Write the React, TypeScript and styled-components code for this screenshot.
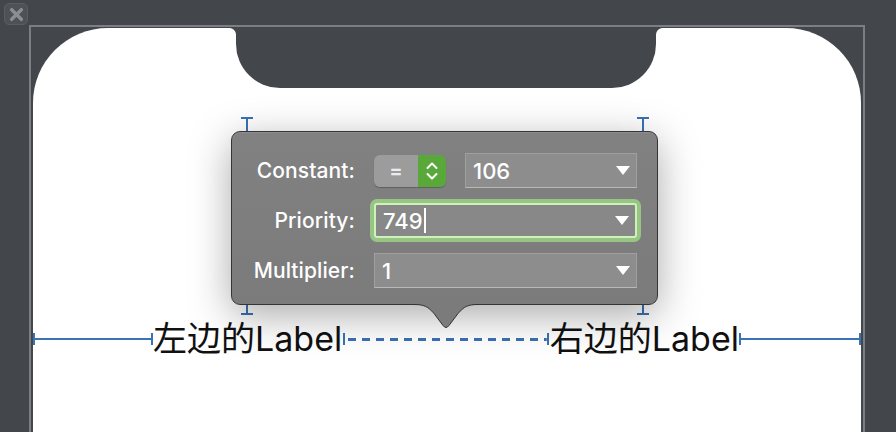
import React from "react";
import styled, { createGlobalStyle, css } from "styled-components";

const BLUE = "#3b72b4";
const DARK = "#43464b";

const GlobalStyle = createGlobalStyle`
    html, body {
        margin: 0;
        padding: 0;
        background: ${DARK};
    }
`;

const Chevrons: React.FC = () => (
    <svg width="14" height="26" viewBox="0 0 14 26" fill="none" stroke="#fff" strokeWidth="2" strokeLinecap="round" strokeLinejoin="round">
        <path d="M2.5 10 L7 5.5 L11.5 10" />
        <path d="M2.5 16 L7 20.5 L11.5 16" />
    </svg>
);

const CloseIcon: React.FC = () => (
    <svg width="15" height="15" viewBox="0 0 14 14" stroke="#8c8e92" strokeWidth="3.2" strokeLinecap="round">
        <path d="M2.5 2.5 L11.5 11.5 M11.5 2.5 L2.5 11.5" />
    </svg>
);

const PopoverArrow: React.FC = () => (
    <ArrowSvg width="64" height="27" viewBox="0 0 64 27">
        <path d="M0 0 H64 V1.5 C54 1.5 50 3.5 44 10.5 L35 22.5 Q32 26.5 29 22.5 L20 10.5 C14 3.5 10 1.5 0 1.5 Z" fill="#7b7b7b" />
        <path d="M0 1.5 C10 1.5 14 3.5 20 10.5 L29 22.5 Q32 26.5 35 22.5 L44 10.5 C50 3.5 54 1.5 64 1.5" fill="none" stroke="#333" strokeWidth="1" />
    </ArrowSvg>
);

const App: React.FC = () => {
    return (
        <Page>
            <GlobalStyle />
            <CloseButton><CloseIcon /></CloseButton>
            <Frame>
                <Screen>
                    <Notch />
                    <ConstraintRow>
                        <Guide $width={120} />
                        <ViewLabel>左边的Label</ViewLabel>
                        <Guide $dashed />
                        <ViewLabel>右边的Label</ViewLabel>
                        <Guide $width={122} />
                    </ConstraintRow>
                </Screen>
            </Frame>

            <Popover>
                <RowLabel>Constant:</RowLabel>
                <Controls>
                    <Stepper>
                        <StepperValue>=</StepperValue>
                        <StepperArrows><Chevrons /></StepperArrows>
                    </Stepper>
                    <Field>
                        106
                        <Triangle />
                    </Field>
                </Controls>

                <RowLabel>Priority:</RowLabel>
                <Field $focused>
                    749
                    <Caret />
                    <Triangle />
                </Field>

                <RowLabel>Multiplier:</RowLabel>
                <Field>
                    1
                    <Triangle />
                </Field>
                <PopoverArrow />
            </Popover>
        </Page>
    );
};

export default App;

const Page = styled.div`
    position: relative;
    width: 896px;
    height: 432px;
    overflow: hidden;
    box-sizing: border-box;
    background: ${DARK};
    padding: 25px 31px 0 29px;
    display: flex;
    flex-direction: column;
    font-family: Inter, "Noto Sans CJK SC", sans-serif;
`;

const CloseButton = styled.div`
    position: absolute;
    left: 4px;
    top: 3px;
    width: 24px;
    height: 22px;
    box-sizing: border-box;
    border-radius: 5px;
    background: #4e5156;
    border: 1px solid #5a5d62;
    display: flex;
    align-items: center;
    justify-content: center;
`;

const Frame = styled.div`
    flex: 1;
    display: flex;
    flex-direction: column;
    border: 2px solid #7b7e82;
    border-bottom: none;
    padding: 1px 2px 0 2px;
`;

const Screen = styled.div`
    position: relative;
    flex: 1;
    background: #fff;
    border-radius: 75px 75px 0 0;
    padding-top: 290px;
`;

const Notch = styled.div`
    position: absolute;
    top: 0;
    left: 203px;
    width: 420px;
    height: 60px;
    background: ${DARK};
    border-radius: 0 0 44px 44px;

    &::before, &::after {
        content: "";
        position: absolute;
        top: 0;
        width: 7px;
        height: 7px;
    }
    &::before {
        left: -7px;
        background: radial-gradient(circle at 0 100%, transparent 6.5px, ${DARK} 7.5px);
    }
    &::after {
        right: -7px;
        background: radial-gradient(circle at 100% 100%, transparent 6.5px, ${DARK} 7.5px);
    }
`;

const ConstraintRow = styled.div`
    display: flex;
    align-items: center;
    height: 42px;
`;

interface GuideProps {
    $dashed?: boolean;
    $width?: number;
}

const Guide = styled.div<GuideProps>`
    height: 12px;
    box-sizing: border-box;
    border-left: 2px solid ${BLUE};
    border-right: 2px solid ${BLUE};
    background-position: center;
    background-repeat: no-repeat;
    ${(p) => p.$width
        ? css`
            flex: 0 0 ${p.$width}px;
            background-image: linear-gradient(${BLUE}, ${BLUE});
            background-size: 100% 2px;
        `
        : css`
            flex: 1;
            margin: 0 1px;
            background-image: repeating-linear-gradient(90deg, #fff 0 3px, ${BLUE} 3px 11px, #fff 11px 14px);
            background-size: 100% 3px;
        `}
`;

const ViewLabel = styled.div`
    position: relative;
    font-size: 34px;
    line-height: 42px;
    color: #111;
    white-space: nowrap;

    &::before {
        content: "";
        position: absolute;
        left: 50%;
        bottom: calc(100% + 3px);
        width: 12px;
        height: 198px;
        margin-left: -7px;
        box-sizing: border-box;
        border-top: 2px solid ${BLUE};
        border-bottom: 2px solid ${BLUE};
        background: linear-gradient(${BLUE}, ${BLUE}) center / 2px 100% no-repeat;
    }
`;

const Popover = styled.div`
    position: absolute;
    left: 231px;
    top: 131px;
    width: 427px;
    height: 174px;
    box-sizing: border-box;
    border-radius: 9px;
    border: 1px solid #353535;
    background: linear-gradient(#818181, #7b7b7b);
    box-shadow: 0 10px 40px rgba(0, 0, 0, 0.34), inset 0 1px 0 rgba(255, 255, 255, 0.1);
    padding: 21px 20px 0 0;
    display: grid;
    grid-template-columns: 123px 1fr;
    grid-auto-rows: 35px;
    column-gap: 19px;
    row-gap: 15px;
    align-items: center;
`;

const ArrowSvg = styled.svg`
    position: absolute;
    left: 182px;
    top: calc(100% - 1px);
    display: block;
`;

const RowLabel = styled.div`
    text-align: right;
    color: #fff;
    font-size: 21px;
    font-weight: 500;
    letter-spacing: 0.1px;
`;

const Controls = styled.div`
    display: flex;
    align-items: center;
    gap: 19px;
`;

const Stepper = styled.div`
    display: flex;
    width: 72px;
    height: 32px;
    border-radius: 6px;
    overflow: hidden;
    box-shadow: 0 1px 1px rgba(0, 0, 0, 0.25);
`;

const StepperValue = styled.div`
    flex: 1;
    background: #9c9c9c;
    color: #ececec;
    font-size: 20px;
    font-weight: 600;
    display: flex;
    align-items: center;
    justify-content: center;
`;

const StepperArrows = styled.div`
    width: 28px;
    background: #58a83a;
    display: flex;
    align-items: center;
    justify-content: center;
`;

interface FieldProps {
    $focused?: boolean;
}

const Field = styled.div<FieldProps>`
    flex: 1;
    height: 35px;
    box-sizing: border-box;
    display: flex;
    align-items: center;
    padding: 0 6px 0 7px;
    background: #8d8d8d;
    border: 1px solid rgba(255, 255, 255, 0.16);
    border-bottom-color: rgba(255, 255, 255, 0.38);
    color: #fff;
    font-size: 22px;
    font-weight: 500;
    ${(p) => p.$focused && css`
        background: #888;
        border: 2px solid #cdf3b9;
        border-radius: 3px;
        box-shadow: 0 0 0 4px #98c485;
    `}
`;

const Caret = styled.span`
    width: 2px;
    height: 25px;
    margin-left: 1px;
    background: #fff;
`;

const Triangle = styled.span`
    margin-left: auto;
    width: 0;
    height: 0;
    border-left: 7px solid transparent;
    border-right: 7px solid transparent;
    border-top: 9px solid #fff;
`;
